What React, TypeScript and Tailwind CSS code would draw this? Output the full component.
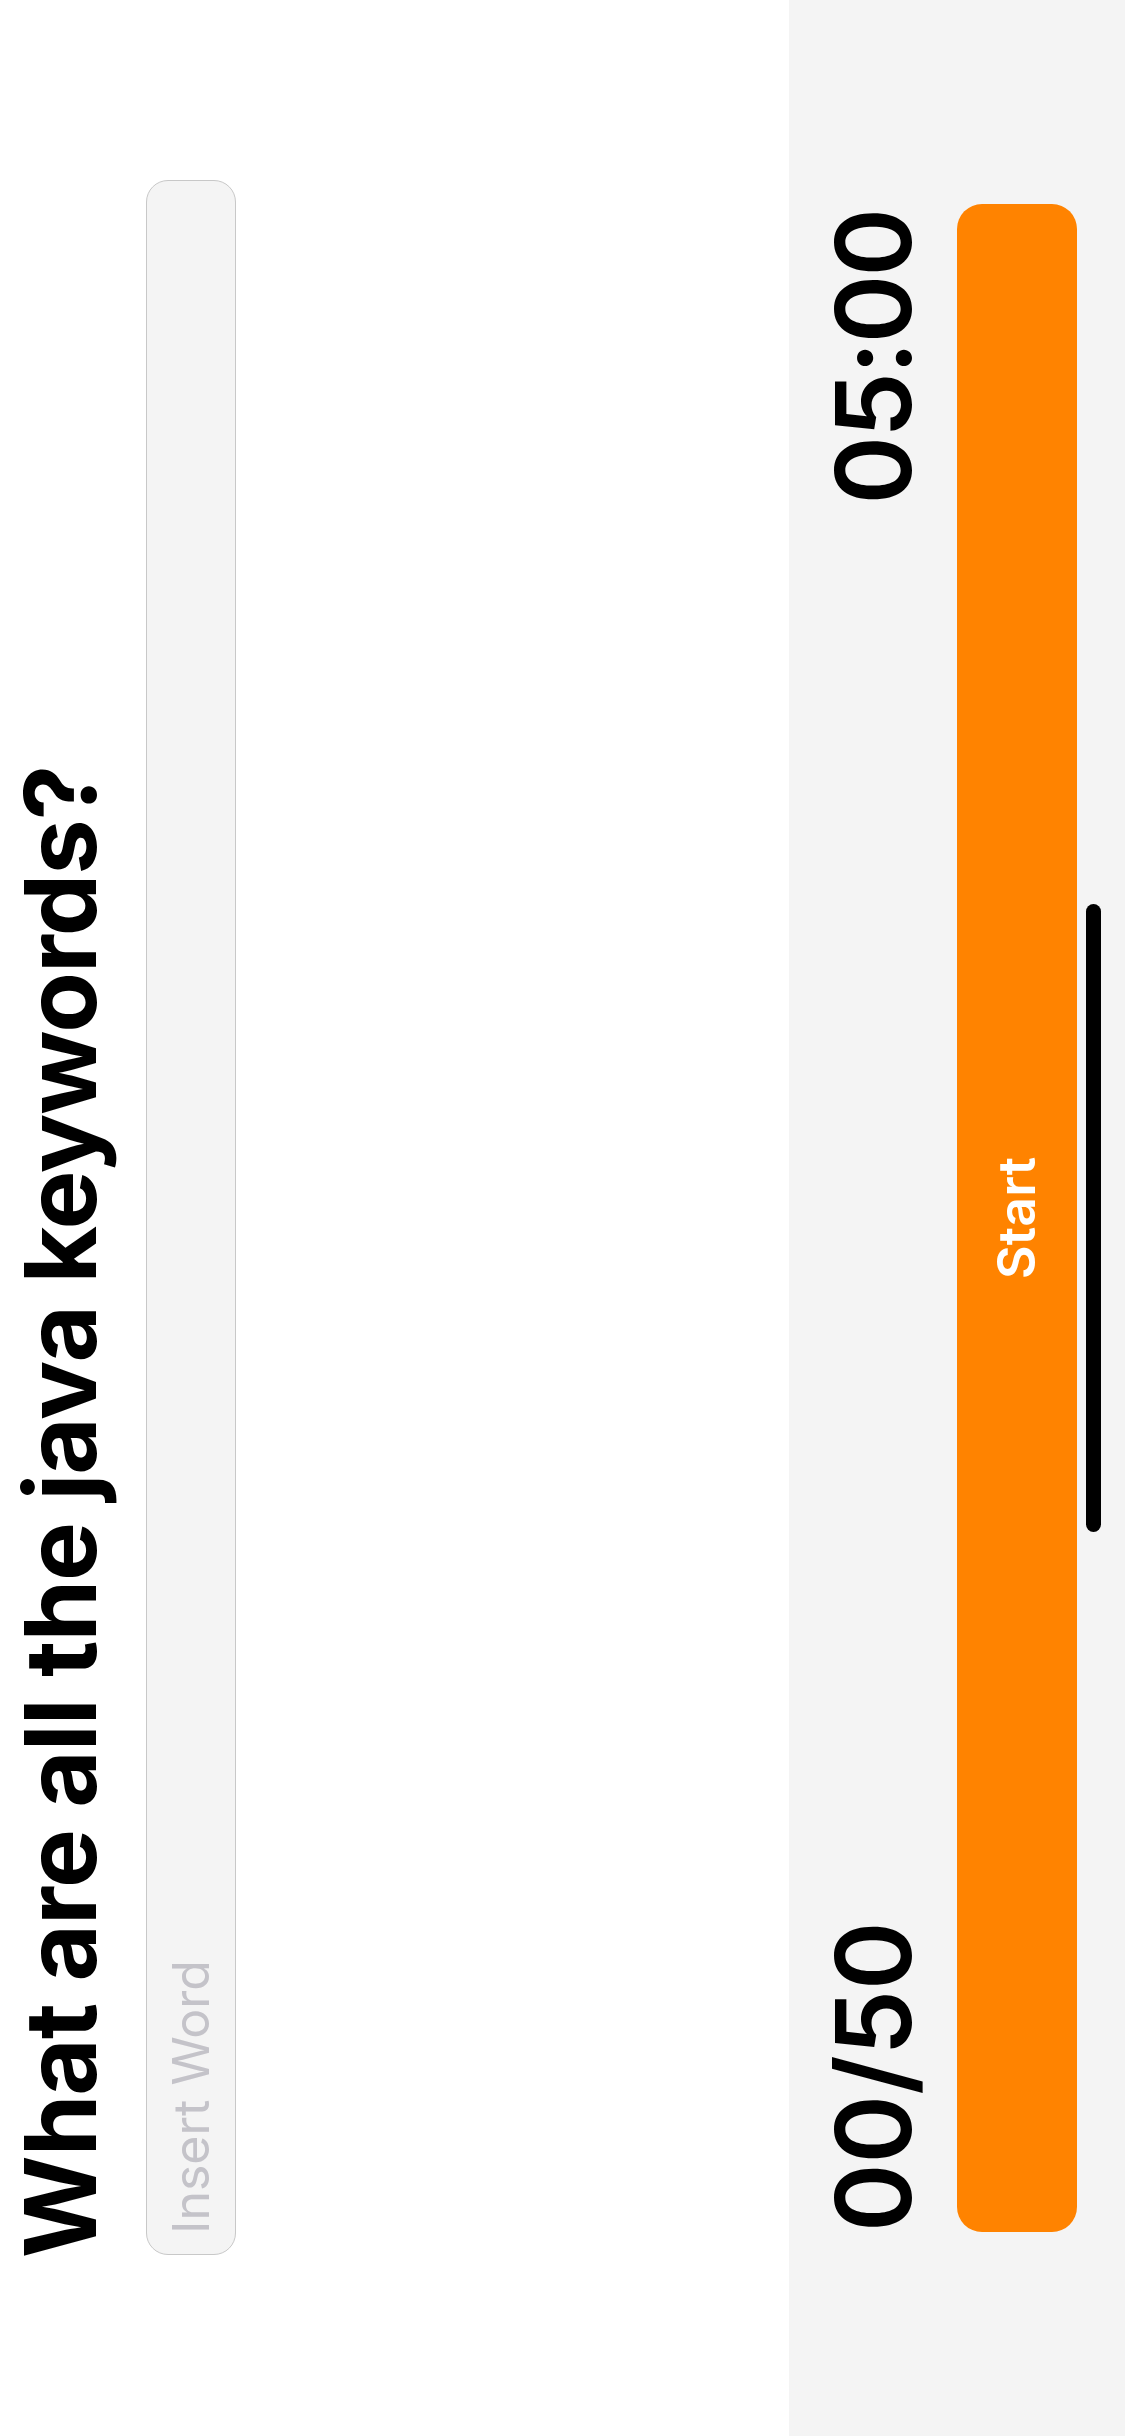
export default function App() {
  return (
    <div className="w-[1125px] h-[2436px] overflow-hidden bg-white">
      {/* landscape screen, turned a quarter counter-clockwise */}
      <div className="w-[2436px] h-[1125px] origin-top-left -rotate-90 translate-y-[2436px] flex flex-col font-['Inter','Liberation_Sans',sans-serif] text-black">
        <div className="flex-1 bg-white pl-[178px]">
          <h1 className="mt-[11px] text-[99px] font-bold leading-none tracking-[-1px] whitespace-nowrap">
            What are all the java keywords?
          </h1>
          <input
            type="text"
            placeholder="Insert Word"
            className="mt-[36px] ml-[3px] block w-[2075px] h-[90px] rounded-[22px] border border-[#c8c8c8] bg-[#f4f4f4] pl-[20px] text-[50px] leading-none outline-none placeholder:text-[#c4c3c9]"
          />
        </div>
        <div className="h-[336px] bg-[#f4f4f4] px-[204px] pt-[32px]">
          <div className="flex justify-between text-[104px] font-semibold leading-none">
            <span>00/50</span>
            <span className="tracking-[-2px] pr-[6px]">05:00</span>
          </div>
          <button className="mt-[32px] w-full h-[120px] rounded-[25px] bg-[#ff8300] text-white text-[52px] font-semibold leading-none">
            Start
          </button>
          <div className="mx-auto mt-[9px] w-[628px] h-[15px] rounded-full bg-black" />
        </div>
      </div>
    </div>
  );
}
